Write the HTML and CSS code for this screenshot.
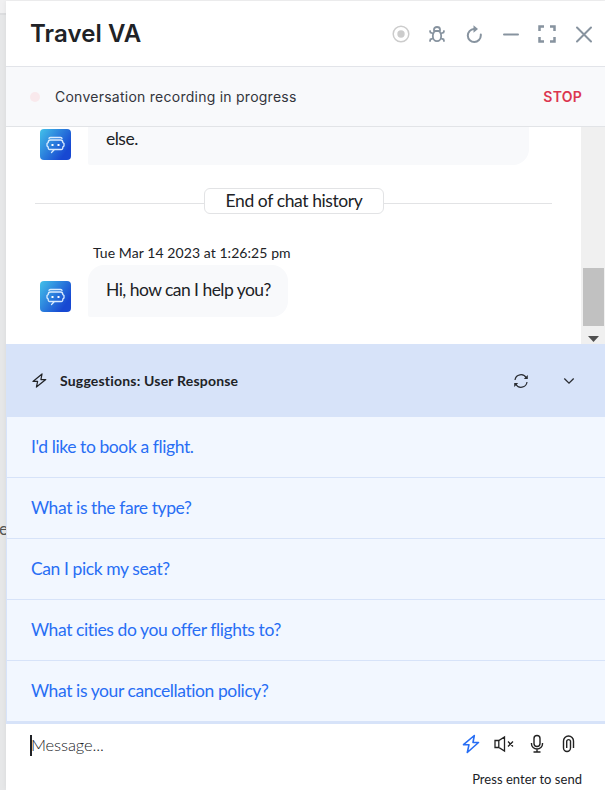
FILE: index.html
```html
<!DOCTYPE html>
<html lang="en">
<head>
<meta charset="utf-8">
<title>Travel VA</title>
<link rel="stylesheet" href="styles.css">
</head>
<body>
<svg width="0" height="0" class="defs" aria-hidden="true">
  <defs>
    <symbol id="bot" viewBox="0 0 31 31">
      <g fill="none" stroke="#d9ecff" stroke-width="1.3" stroke-linejoin="round" stroke-linecap="round">
        <path d="M9 9.500Q9 8.500 10.500 8.500H20.500Q22 8.500 22 9.500"/>
        <path d="M14.500 20.500H21.500Q22.800 20.500 22.800 19V18L24 17V14.500L22.800 13.500Q22.800 11 20.500 11H10.500Q8.200 11 8.200 13.500L7 14.500V17L8.200 18V19Q8.200 20.500 9.500 20.500H14.500L11.500 23.500"/>
      </g>
      <path d="M11.500 15h2v2h-2zM17.500 15h2v2h-2z" fill="#fff"/>
    </symbol>
    <symbol id="bolt" viewBox="0 0 16 16">
      <path d="M10.700 1L1 9H6L4.700 15L14.700 7H9.500Z" fill="none" stroke="currentColor" stroke-linejoin="round"/>
    </symbol>
  </defs>
</svg>
<div class="backdrop"><span class="backdrop-text">e</span></div>
<main class="panel">
  <header class="header">
    <h1>Travel VA</h1>
    <div class="tools">
      <svg width="18" height="18" viewBox="0 0 18 18"><circle cx="9" cy="9" r="7.800" fill="none" stroke="#ccc" stroke-width="1.500"/><circle cx="9" cy="9" r="3.700" fill="#ccc"/></svg>
      <svg width="18" height="18" viewBox="0 0 18 18" class="line thin"><ellipse cx="9" cy="11" rx="4.200" ry="5.200"/><path d="M6 6V4.500Q6 2 9 2T12 4.500V6M6 6H12M5.300 8.500L2.500 7.500L2 6M12.700 8.500L15.500 7.500L16 6M5 13.500L2.500 14.300L2 16M13 13.500L15.500 14.300L16 16"/></svg>
      <svg width="18" height="18" viewBox="0 0 18 18" class="line"><path d="M10 4H9A6.500 6.500 0 1 0 15.800 10.500V9.500"/><path d="M8.500 .3L13 4L8.500 7.700Z" class="solid"/></svg>
      <svg width="18" height="18" viewBox="0 0 18 18" class="line"><path d="M2 9.500H16"/></svg>
      <svg width="18" height="18" viewBox="0 0 18 18" class="line heavy"><path d="M1.500 6V1.500H6M12 1.500H16.500V6M16.500 12V16.500H12M6 16.500H1.500V12"/></svg>
      <svg width="18" height="18" viewBox="0 0 18 18" class="line"><path d="M2 2.500L16 16.500M16 2.500L2 16.500"/></svg>
    </div>
  </header>
  <section class="recording">
    <i class="dot"></i>
    <span class="recording-label">Conversation recording in progress</span>
    <span class="stop">STOP</span>
  </section>
  <section class="chat">
    <div class="thread">
      <div class="row previous">
        <div class="avatar"><svg width="31" height="31"><use href="#bot"/></svg></div>
        <div class="bubble wide">else.</div>
      </div>
      <div class="divider"><span class="pill">End of chat history</span></div>
      <div class="time">Tue Mar 14 2023 at 1:26:25 pm</div>
      <div class="row greeting">
        <div class="avatar"><svg width="31" height="31"><use href="#bot"/></svg></div>
        <div class="bubble">Hi, how can I help you?</div>
      </div>
    </div>
    <div class="scrollbar"><div class="thumb"></div><svg width="11" height="6" viewBox="0 0 11 6"><path d="M0 0H11L5.500 6Z" fill="#505050"/></svg></div>
  </section>
  <section class="suggestions">
    <div class="suggestions-head">
      <svg class="head-bolt" width="15" height="15"><use href="#bolt"/></svg>
      <h2>Suggestions: User Response</h2>
      <svg class="sync" width="16" height="16" viewBox="0 0 16 16"><g fill="none" stroke="#2a2d33" stroke-width="1.200"><path d="M2 7A6 6 0 0 1 13.300 5M14 9A6 6 0 0 1 2.700 11"/></g><path d="M14.800 2V6H10.800ZM1.200 14V10H5.200Z" fill="#2a2d33"/></svg>
      <svg width="12" height="8" viewBox="0 0 12 8"><path d="M1.300 1.500L6 6.200L10.700 1.500" fill="none" stroke="#2a2d33" stroke-width="1.300"/></svg>
    </div>
    <ul class="list">
      <li>I'd like to book a flight.</li>
      <li>What is the fare type?</li>
      <li>Can I pick my seat?</li>
      <li>What cities do you offer flights to?</li>
      <li>What is your cancellation policy?</li>
    </ul>
  </section>
  <footer class="composer">
    <div class="compose-row">
      <div class="message"><i class="caret"></i><span>Message...</span></div>
      <div class="actions">
        <svg class="blue" width="18" height="20" viewBox="0 0 18 20"><path d="M12.300 1.500L1.500 10.700H7L5.300 18.500L16.500 8.500H11Z" fill="none" stroke="currentColor" stroke-width="1.600" stroke-linejoin="round"/></svg>
        <svg width="20" height="20" viewBox="0 0 20 20"><g fill="none" stroke="#222" stroke-width="1.300"><path d="M1 6.500H4.800L10.500 3V17L4.800 13.500H1ZM4.800 6.500V13.500M14 7.500L19 12.500M19 7.500L14 12.500"/></g></svg>
        <svg width="14" height="20" viewBox="0 0 14 20"><g fill="none" stroke="#222" stroke-width="1.400"><rect x="4" y="1.500" width="6" height="11" rx="3"/><path d="M1.500 9V10A5.500 5 0 0 0 12.500 10V9M7 15V18M3.500 18H10.500"/></g></svg>
        <svg width="13" height="20" viewBox="0 0 13 20"><path d="M11.500 14V7A5 5 0 0 0 1.500 7V14A3.500 3.500 0 0 0 8.500 14V7A2 2 0 0 0 4.700 7V14" fill="none" stroke="#222" stroke-width="1.400"/></svg>
      </div>
    </div>
    <div class="hint">Press enter to send</div>
  </footer>
</main>
</body>
</html>
```
FILE: styles.css
```css
* { box-sizing: border-box; }
body {
  margin: 0;
  width: 605px;
  height: 790px;
  overflow: hidden;
  display: flex;
  background: #f1f1f2;
  font-family: Lato, sans-serif;
  color: #202226;
}
.defs { position: absolute; }
.backdrop {
  width: 6px;
  flex: none;
  overflow: hidden;
  padding-top: 519px;
  background: linear-gradient(#f0f0f1 0 13px, #dcdddf 13px 15px, #e6e7e8 15px);
}
.backdrop-text {
  display: block;
  margin-left: -1px;
  font-size: 17px;
  line-height: 20px;
  color: #555;
}
.panel {
  width: 599px;
  height: 789px;
  margin-top: 1px;
  background: #fff;
  display: flex;
  flex-direction: column;
  box-shadow: 0 0 5px rgba(0, 0, 0, .06);
}
.header {
  height: 66px;
  flex: none;
  border-bottom: 1px solid #e2e4e9;
  display: flex;
  justify-content: space-between;
  align-items: center;
  padding: 1px 12px 0 24px;
}
h1 {
  margin: 0;
  font: 600 24px/30px Inter, sans-serif;
  letter-spacing: .1px;
}
.tools { display: flex; gap: 18.700px; }
.tools svg, .actions svg { display: block; }
.line { fill: none; stroke: #87939f; stroke-width: 2; stroke-linecap: round; }
.thin { stroke-width: 1.800; }
.heavy { stroke-width: 2.500; stroke-linecap: butt; }
.solid { fill: #87939f; stroke: none; }
.recording {
  height: 60px;
  flex: none;
  display: flex;
  align-items: center;
  padding: 1px 23px 0 24px;
  background: #f8f9fb;
  border-bottom: 1px solid #e2e4e7;
  font: 400 14px/20px Inter, sans-serif;
  letter-spacing: .25px;
}
.dot { width: 10px; height: 10px; border-radius: 50%; background: #f9e9ec; }
.recording-label { margin-left: 15px; color: #33353c; }
.stop { margin-left: auto; color: #dc3650; font-weight: 600; }
.chat { height: 217px; flex: none; display: flex; overflow: hidden; }
.thread { width: 575px; }
.row { display: flex; align-items: flex-start; padding-left: 34px; }
.avatar {
  width: 31px;
  height: 31px;
  border-radius: 4px;
  overflow: hidden;
  background: linear-gradient(125deg, #40bae8 5%, #1748d2 80%);
}
.avatar svg { display: block; }
.previous { height: 61px; }
.previous .avatar { margin-top: 2px; }
.bubble {
  width: 200px;
  height: 52px;
  margin-left: 17px;
  padding: 14px 18px;
  background: #f8f9fb;
  border-radius: 16px 16px 16px 2px;
  font-size: 17.500px;
  line-height: 22px;
  letter-spacing: -.54px;
  white-space: nowrap;
}
.wide { width: 441px; height: 38px; padding-top: 1px; border-radius: 0 0 16px 2px; letter-spacing: -.5px; }
.divider { display: flex; align-items: center; height: 26px; margin: 0 29px; }
.divider::before, .divider::after { content: ""; height: 1px; background: #e2e3e5; flex: none; margin-top: 5px; }
.divider::before { width: 169px; }
.divider::after { width: 168px; }
.pill {
  width: 180px;
  height: 26px;
  flex: none;
  border: 1px solid #e2e3e5;
  border-radius: 6px;
  text-align: center;
  font-size: 17.500px;
  line-height: 23px;
  letter-spacing: -.4px;
}
.time { height: 51px; padding: 28px 0 0 87px; font-size: 14px; line-height: 22px; letter-spacing: .07px; }
.greeting .avatar { margin-top: 16px; }
.scrollbar { width: 24px; background: #f0f0f0; padding: 141px 0 0 2px; }
.thumb { width: 21px; height: 58px; background: #c1c1c1; }
.scrollbar svg { display: block; margin: 10px 0 0 5px; }
.suggestions { flex: none; border-left: 1px solid #d7e3f9; border-bottom: 3px solid #d7e3f9; }
.suggestions-head {
  height: 73px;
  display: flex;
  align-items: center;
  padding: 0 30px 0 25px;
  background: #d7e3f9;
}
.head-bolt { stroke-width: 1.300; }
h2 { margin: 0 auto 0 13px; font-size: 14px; line-height: 20px; font-weight: 700; letter-spacing: .19px; }
.sync { margin-right: 34px; }
.list { margin: 0; padding: 0; list-style: none; background: #f2f7ff; }
.list li {
  height: 61px;
  padding: 0 24px;
  border-bottom: 1px solid #d7e3f9;
  font-size: 17.500px;
  line-height: 60px;
  letter-spacing: -.41px;
  color: #286ef4;
}
.list li:last-child { border: 0; height: 60px; }
.composer { flex: 1; padding: 9px 23px 0 24px; }
.compose-row { display: flex; justify-content: space-between; height: 34px; }
.message { display: flex; align-items: center; height: 24px; font-size: 16.500px; font-weight: 300; letter-spacing: -.1px; }
.caret { width: 2px; height: 21px; background: #202226; margin-right: -1px; }
.actions { display: flex; align-items: center; gap: 14.500px; height: 22px; padding-right: 7px; }
.actions svg:nth-child(3) { margin: 0 4px 0 1px; }
.blue { color: #286ef4; }
.hint { text-align: right; font-size: 13px; line-height: 24px; letter-spacing: .03px; }
```
